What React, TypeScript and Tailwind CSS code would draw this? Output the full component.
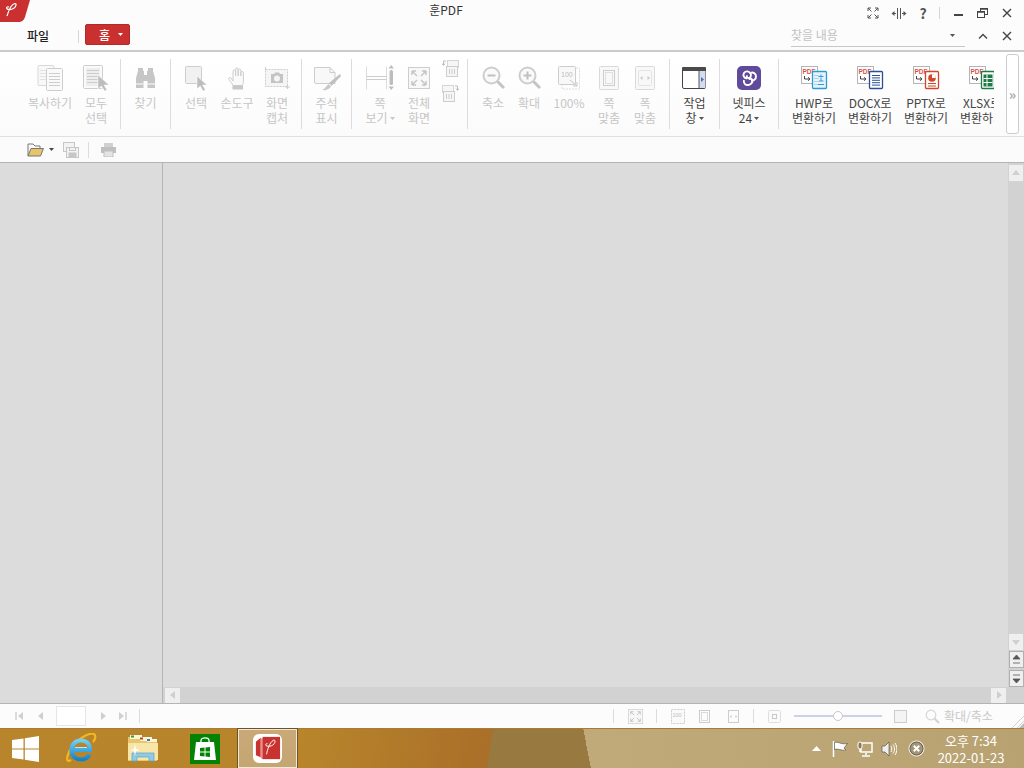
import { ReactNode } from "react"

const G = "#cdcdcd" // disabled icon stroke
const L = "#f1f1f1" // disabled icon fill

const Svg = (props: { w: number; h: number; children: ReactNode; className?: string }) => (
    <svg width={props.w} height={props.h} viewBox={`0 0 ${props.w} ${props.h}`} fill="none" className={`shrink-0 ${props.className || ""}`}>
        {props.children}
    </svg>
)

const Caret = (props: { c?: string }) => (
    <svg width="5" height="3" viewBox="0 0 5 3" className="inline-block ml-[2px] mb-[2px]"><path d="M0 0H5L2.5 3Z" fill={props.c || "#555"} /></svg>
)

const Lines = (props: { x: number; y: number; w: number; n: number; c?: string; step?: number }) => (
    <>
        {Array.from({ length: props.n }).map((_, i) => (
            <path key={i} d={`M${props.x} ${props.y + i * (props.step || 3) + 0.5}h${props.w}`} stroke={props.c || G} />
        ))}
    </>
)

const CopyIcon = () => (
    <Svg w={27} h={26}>
        <rect x="1" y="0.5" width="16" height="20" rx="1" fill="#f8f8f8" stroke="#d8d8d8" />
        <Lines x={3} y={5} w={7} n={4} c="#e2e2e2" />
        <rect x="9.5" y="3.5" width="16" height="22" rx="1" fill="#fafafa" stroke={G} />
        <Lines x={12} y={8} w={11} n={5} />
    </Svg>
)
const SelectAllIcon = () => (
    <Svg w={27} h={26}>
        <rect x="0.5" y="0.5" width="19" height="23" rx="1" fill="#fafafa" stroke={G} />
        <rect x="3" y="3" width="14" height="18" fill="#eeeeee" />
        <Lines x={4} y={5} w={12} n={5} />
        <path d="M15 10L26 20H21L24 25L21.5 26L18.5 21L15 24Z" fill="#bdbdbd" stroke="#fff" strokeWidth="0.5" />
    </Svg>
)
const BinocularIcon = () => (
    <Svg w={21} h={22}>
        <path d="M3 1H8V4H9V8H12V4H13V1H18V4L20 11V21H12.5V14H8.5V21H1V11L3 4Z" fill="#c6c6c6" />
        <path d="M1 17H8.5M12.5 17H20" stroke="#fff" />
    </Svg>
)
const SelectIcon = () => (
    <Svg w={23} h={25}>
        <rect x="0.5" y="0.5" width="16" height="17" rx="1" fill={L} stroke={G} />
        <path d="M12 10L22 19H17.5L20.5 24L18 25L15.2 20L12 23Z" fill="#bdbdbd" stroke="#fff" strokeWidth="0.5" />
    </Svg>
)
const HandIcon = () => (
    <Svg w={18} h={23}>
        <path d="M5 14V4.3a1.3 1.3 0 0 1 2.6 0V9V2.3a1.3 1.3 0 0 1 2.6 0V9V3.3a1.3 1.3 0 0 1 2.6 0V9V5.8a1.3 1.3 0 0 1 2.6 0V14C15.4 16 14.8 17 14.5 18.5H5C4.2 16.5 2.5 15 1 12.5C0.3 10.8 2.2 9.6 3.2 11Z" fill="#fafafa" stroke={G} />
        <rect x="4.5" y="18.5" width="10.5" height="4" fill="#c8c8c8" />
    </Svg>
)
const CaptureIcon = () => (
    <Svg w={26} h={22}>
        <rect x="1.5" y="2.5" width="22" height="17" stroke={G} strokeDasharray="2 1" fill="#f5f5f5" />
        <path d="M7 7H10L11 5.5H15L16 7H19V16H7Z" fill="#c4c4c4" />
        <circle cx="13" cy="11.5" r="3" fill="#f5f5f5" />
        <path d="M1.5 0V3M23.5 18V22M21 20H26" stroke={G} />
    </Svg>
)
const AnnotateIcon = () => (
    <Svg w={28} h={25}>
        <path d="M1.5 1.5H17L22 6.5V17.5H3A1.5 1.5 0 0 1 1.5 16Z" fill="#f8f8f8" stroke={G} />
        <path d="M17 1.5V6.5H22" stroke={G} />
        <path d="M27 8L16 17L18.5 20L28 10Z" fill="#c0c0c0" />
        <path d="M15.5 18L18 20.5C16 24 12 24.5 9 24C12 23 13 20 15.5 18Z" fill="#c8c8c8" />
    </Svg>
)
const PageViewIcon = () => (
    <Svg w={28} h={26}>
        <path d="M0.5 1.5V24.5M20.5 1.5V24.5" stroke="#dcdcdc" />
        <path d="M0.5 11.5H20.5M0.5 14.5H20.5" stroke={G} />
        <rect x="23.5" y="5" width="3.5" height="15" rx="1.5" fill="#bdbdbd" />
        <path d="M25.2 0L28 3.5H22.5ZM25.2 25L28 21.5H22.5Z" fill="#bdbdbd" />
    </Svg>
)
const FullIcon = (props: { s?: number }) => {
    const s = props.s || 22
    return (
        <svg width={s} height={s} viewBox="0 0 22 22" fill="none" className="shrink-0">
            <rect x="0.5" y="0.5" width="21" height="21" fill="#f8f8f8" stroke={G} />
            <path d="M4 4L9 9M4 4H8M4 4V8M18 4L13 9M18 4H14M18 4V8M4 18L9 13M4 18H8M4 18V14M18 18L13 13M18 18H14M18 18V14" stroke="#c4c4c4" strokeWidth="1.4" />
        </svg>
    )
}
const RotateIcon = (props: { flip?: boolean }) => (
    <Svg w={17} h={18} className={props.flip ? "-scale-x-100" : ""}>
        <rect x="5.5" y="1.5" width="11" height="7" fill="#f6f6f6" stroke="#d5d5d5" />
        <rect x="4.5" y="7.5" width="11" height="10" fill="#f6f6f6" stroke={G} />
        <path d="M7.5 10V15M10 10V15M12.5 10V15" stroke={G} />
        <path d="M4 2H1.5V6M0 4.5L1.5 6.5L3 4.5" stroke="#bdbdbd" />
    </Svg>
)
const ZoomIcon = (props: { plus?: boolean }) => (
    <Svg w={23} h={24}>
        <circle cx="9.5" cy="9.5" r="8" stroke={G} strokeWidth="2" fill="#fafafa" />
        <path d="M5.5 9.5H13.5" stroke="#c0c0c0" strokeWidth="2" />
        {props.plus && <path d="M9.5 5.5V13.5" stroke="#c0c0c0" strokeWidth="2" />}
        <path d="M15.5 15.5L22 22" stroke="#c4c4c4" strokeWidth="3" />
    </Svg>
)
const HundredIcon = () => (
    <Svg w={22} h={24}>
        <rect x="0.5" y="0.5" width="17" height="18" rx="1" fill="#f8f8f8" stroke={G} />
        <path d="M18 2H21.5V23H4V19" stroke="#dedede" strokeDasharray="2 1" />
        <text x="3" y="11" fontSize="7" fill="#bdbdbd" fontFamily="Liberation Sans">100</text>
        <path d="M12 14L19 20M19 20V16M19 20H15" stroke="#c8c8c8" />
    </Svg>
)
const FitPageIcon = () => (
    <Svg w={20} h={24}>
        <rect x="0.5" y="0.5" width="19" height="23" rx="1" fill="#f8f8f8" stroke="#dadada" />
        <rect x="4.5" y="4.5" width="11" height="15" stroke={G} />
        <rect x="6.5" y="6.5" width="7" height="11" stroke="#e0e0e0" />
    </Svg>
)
const FitWidthIcon = () => (
    <Svg w={20} h={24}>
        <rect x="0.5" y="0.5" width="19" height="23" rx="1" fill="#f8f8f8" stroke="#dadada" />
        <rect x="3.5" y="4.5" width="13" height="15" rx="1" stroke="#e4e4e4" />
        <path d="M7.5 10L5 12L7.5 14ZM12.5 10L15 12L12.5 14Z" fill="#c8c8c8" />
    </Svg>
)
const TaskPaneIcon = () => (
    <Svg w={25} h={22}>
        <rect x="0.5" y="0.5" width="23" height="21" rx="1.5" fill="#fff" stroke="#444" />
        <rect x="0" y="0" width="24" height="4" rx="1" fill="#4a4a4a" />
        <rect x="17" y="4" width="6.5" height="17" fill="#d4ddf0" />
        <path d="M17 4V21" stroke="#555" />
        <path d="M19 10L22 12.5L19 15Z" fill="#4a6fb5" />
    </Svg>
)
const NetpiaIcon = () => (
    <Svg w={24} h={24}>
        <rect width="24" height="24" rx="5" fill="#5f4a9c" />
        <path d="M10 12.5C7 12 5.5 9.5 7 7C8.5 4.8 12 4.8 13.5 7.5C15 10 13 12.5 11 12C9.5 11.5 9.5 10 10.5 9.5" stroke="#fff" strokeWidth="1.9" />
        <path d="M13.5 7C16 5.8 19 7.5 19 10.5C19 13.5 16.5 15 14 14.5" stroke="#fff" strokeWidth="1.9" />
        <path d="M7 14C6 17 8.5 19.5 11.5 19C14.5 18.5 16 16 15 13.5C14 12 12.5 12.5 12.5 14" stroke="#fff" strokeWidth="1.9" />
    </Svg>
)
const ConvertIcon = (props: { kind: string }) => {
    const c = props.kind === "hwp" ? "#2f9bd6" : props.kind === "docx" ? "#2b4f94" : props.kind === "pptx" ? "#d2462a" : "#1f7a45"
    return (
        <Svg w={27} h={24}>
            <rect x="0.5" y="0.5" width="16" height="17" fill="#fff" stroke="#b5b5b5" />
            <text x="1.5" y="7.5" fontSize="6.5" fontWeight="700" fill="#d8504e" fontFamily="Liberation Sans">PDF</text>
            <path d="M3.5 10V13H8.5M7 11.3L9 13L7 14.7" stroke="#444" />
            <rect x={props.kind === "hwp" ? 11.5 : 12.5} y="5.5" width={props.kind === "hwp" ? 14 : 13} height="17" rx="1" fill={props.kind === "hwp" ? "#e6f3fa" : "#fff"} stroke={c} strokeWidth="1.3" />
            {props.kind === "hwp" && (
                <>
                    <Lines x={13} y={9} w={5} n={4} c="#a8d4ec" />
                    <path d="M20 8.5V10M17.5 10.5H22.5M18 15H22.5M20 11.5V15M17 18.5H23" stroke={c} />
                </>
            )}
            {props.kind === "docx" && <Lines x={15} y={9} w={8} n={5} c={c} step={2.4} />}
            {props.kind === "pptx" && (
                <>
                    <circle cx="19" cy="12" r="3.8" fill={c} />
                    <path d="M19 12V8.2A3.8 3.8 0 0 1 22.8 12Z" fill="#fff" />
                    <path d="M15 17.5H23M15 20H23" stroke={c} />
                </>
            )}
            {props.kind === "xlsx" && (
                <>
                    <rect x="14.5" y="8.5" width="9" height="12" fill={c} />
                    <path d="M14.5 12.5H23.5M14.5 16.5H23.5M18 8.5V20.5" stroke="#fff" />
                </>
            )}
        </Svg>
    )
}

const Sep = () => <div className="w-px h-[70px] bg-[#dddddd] shrink-0" />

const Tool = (props: { w: number; icon: ReactNode; lines: ReactNode[]; on?: boolean }) => (
    <div className={`flex flex-col items-center shrink-0 pt-[2px] text-[12px] leading-[15px] whitespace-nowrap ${props.on ? "text-[#444444]" : "text-[#c6c6c6]"}`} style={{ width: props.w }}>
        <div className="h-[34px] flex items-center justify-center">{props.icon}</div>
        {props.lines.map((l, i) => <div key={i}>{l}</div>)}
    </div>
)

const Ribbon = () => (
    <div className="flex h-[85px] bg-gradient-to-b from-white to-[#fbfbfb] border-b border-[#e0e0e0]">
        <div className="w-[994px] overflow-hidden flex items-start pt-[7px] pl-[27px] shrink-0">
            <Tool w={46} icon={<CopyIcon />} lines={["복사하기"]} />
            <Tool w={46} icon={<SelectAllIcon />} lines={["모두", "선택"]} />
            <div className="w-px shrink-0" />
            <Sep />
            <Tool w={49} icon={<BinocularIcon />} lines={["찾기"]} />
            <Sep />
            <div className="w-[5px] shrink-0" />
            <Tool w={40} icon={<SelectIcon />} lines={["선택"]} />
            <Tool w={42} icon={<HandIcon />} lines={["손도구"]} />
            <Tool w={38} icon={<CaptureIcon />} lines={["화면", "캡처"]} />
            <div className="w-[5px] shrink-0" />
            <Sep />
            <Tool w={49} icon={<AnnotateIcon />} lines={["주석", "표시"]} />
            <Sep />
            <div className="w-[8px] shrink-0" />
            <Tool w={40} icon={<PageViewIcon />} lines={["쪽", <>보기<Caret c="#c6c6c6" /></>]} />
            <Tool w={38} icon={<FullIcon />} lines={["전체", "화면"]} />
            <div className="w-[24px] shrink-0 flex flex-col items-center gap-[7px]">
                <RotateIcon />
                <RotateIcon flip />
            </div>
            <div className="w-[5px] shrink-0" />
            <Sep />
            <div className="w-[7px] shrink-0" />
            <Tool w={36} icon={<ZoomIcon />} lines={["축소"]} />
            <Tool w={36} icon={<ZoomIcon plus />} lines={["확대"]} />
            <Tool w={44} icon={<HundredIcon />} lines={["100%"]} />
            <Tool w={36} icon={<FitPageIcon />} lines={["쪽", "맞춤"]} />
            <Tool w={36} icon={<FitWidthIcon />} lines={["폭", "맞춤"]} />
            <div className="w-[6px] shrink-0" />
            <Sep />
            <Tool on w={49} icon={<TaskPaneIcon />} lines={["작업", <>창<Caret /></>]} />
            <Sep />
            <Tool on w={58} icon={<NetpiaIcon />} lines={["넷피스", <>24<Caret /></>]} />
            <Sep />
            <div className="w-[7px] shrink-0" />
            <Tool on w={56} icon={<ConvertIcon kind="hwp" />} lines={["HWP로", "변환하기"]} />
            <Tool on w={56} icon={<ConvertIcon kind="docx" />} lines={["DOCX로", "변환하기"]} />
            <Tool on w={56} icon={<ConvertIcon kind="pptx" />} lines={["PPTX로", "변환하기"]} />
            <Tool on w={56} icon={<ConvertIcon kind="xlsx" />} lines={["XLSX로", "변환하기"]} />
        </div>
        <div className="w-[13px] h-[80px] ml-[12px] mt-[2px] border border-[#cccccc] rounded-[3px] bg-white flex items-center justify-center text-[#a8a8a8] text-[14px] leading-none font-bold">»</div>
    </div>
)

const ScrollBtn = (props: { children: ReactNode; className?: string }) => (
    <div className={`bg-[#efefef] flex items-center justify-center shrink-0 ${props.className || ""}`}>{props.children}</div>
)

const Tri = (props: { d: "u" | "d" | "l" | "r"; c?: string }) => {
    const p = { u: "M0 6L4 1L8 6Z", d: "M0 2H8L4 7Z", l: "M6 0V8L1 4Z", r: "M2 0V8L7 4Z" }[props.d]
    return <svg width="8" height="8" viewBox="0 0 8 8"><path d={p} fill={props.c || "#cfcfcf"} /></svg>
}

const Workspace = () => (
    <div className="flex h-[541px] bg-[#dcdcdc] border-t border-[#b4b4b4]">
        <div className="w-[163px] border-r border-[#b4b4b4] shrink-0" />
        <div className="flex-1 flex flex-col min-w-0">
            <div className="flex flex-1 min-h-0">
                <div className="flex-1" />
                <div className="w-[16px] bg-[#d2d2d2] flex flex-col items-start pl-px pt-[2px]">
                    <ScrollBtn className="w-[14px] h-[16px]"><Tri d="u" /></ScrollBtn>
                    <div className="flex-1" />
                    <ScrollBtn className="w-[14px] h-[16px]"><Tri d="d" /></ScrollBtn>
                    <ScrollBtn className="w-[15px] h-[17px] mt-px border border-[#b0b0b0]">
                        <svg width="9" height="9" viewBox="0 0 9 9"><path d="M1 4L4.5 0L8 4ZM1 8H8" fill="#555" stroke="#555" strokeWidth="0.8" /></svg>
                    </ScrollBtn>
                    <ScrollBtn className="w-[15px] h-[17px] mt-[2px] border border-[#b0b0b0]">
                        <svg width="9" height="9" viewBox="0 0 9 9"><path d="M1 5L4.5 9L8 5ZM1 1H8" fill="#555" stroke="#555" strokeWidth="0.8" /></svg>
                    </ScrollBtn>
                </div>
            </div>
            <div className="h-[16px] bg-[#d2d2d2] flex items-center pl-[2px] pr-[18px] shrink-0">
                <ScrollBtn className="w-[15px] h-[15px]"><Tri d="l" /></ScrollBtn>
                <div className="flex-1" />
                <ScrollBtn className="w-[15px] h-[15px]"><Tri d="r" /></ScrollBtn>
            </div>
        </div>
    </div>
)

const StatusBar = () => (
    <div className="flex items-center h-[25px] bg-[#fcfcfc] border-t border-[#b4b4b4] relative">
        <div className="w-[15px] shrink-0" />
        <svg width="8" height="8" viewBox="0 0 8 8"><path d="M1 0V8" stroke="#d0d0d0" strokeWidth="1.5" /><path d="M8 0V8L3 4Z" fill="#d0d0d0" /></svg>
        <div className="w-[14px] shrink-0" />
        <Tri d="l" />
        <div className="w-[30px] h-[20px] ml-[11px] border border-[#e6e6e6] bg-white shrink-0" />
        <div className="w-[13px] shrink-0" />
        <Tri d="r" />
        <div className="w-[12px] shrink-0" />
        <svg width="8" height="8" viewBox="0 0 8 8"><path d="M0 0V8L5 4Z" fill="#d0d0d0" /><path d="M7 0V8" stroke="#d0d0d0" strokeWidth="1.5" /></svg>
        <div className="w-px h-[14px] bg-[#dcdcdc] ml-[12px]" />
        <div className="flex-1" />
        <div className="w-px h-[14px] bg-[#dcdcdc] mr-px" />
        <div className="w-[13px] shrink-0" />
        <FullIcon s={15} />
        <div className="w-[13px] shrink-0" />
        <div className="w-px h-[14px] bg-[#dcdcdc]" />
        <div className="w-[14px] shrink-0" />
        <Svg w={14} h={15}>
            <rect x="0.5" y="0.5" width="13" height="14" fill="#fafafa" stroke={G} strokeDasharray="2 1" />
            <text x="1.5" y="8" fontSize="5.5" fill="#bdbdbd" fontFamily="Liberation Sans">100</text>
        </Svg>
        <div className="w-[14px] shrink-0" />
        <Svg w={11} h={13}>
            <rect x="0.5" y="0.5" width="10" height="12" stroke={G} />
            <rect x="2.5" y="2.5" width="6" height="8" stroke="#dadada" />
        </Svg>
        <div className="w-[18px] shrink-0" />
        <Svg w={11} h={13}>
            <rect x="0.5" y="0.5" width="10" height="12" stroke={G} />
            <path d="M3.5 5L1.8 6.5L3.5 8ZM7.5 5L9.2 6.5L7.5 8Z" fill="#c8c8c8" />
        </Svg>
        <div className="w-[14px] shrink-0" />
        <div className="w-px h-[14px] bg-[#dcdcdc]" />
        <div className="w-[14px] shrink-0" />
        <Svg w={13} h={13}>
            <rect x="0.5" y="0.5" width="12" height="12" rx="1" stroke="#dedede" fill="#fbfbfb" />
            <rect x="4.5" y="4.5" width="4" height="4" stroke="#c8c8c8" />
        </Svg>
        <div className="w-[13px] shrink-0" />
        {/* zoom slider */}
        <div className="w-[88px] h-[2px] bg-[#c9d3e6] relative shrink-0">
            <div className="absolute left-[39px] -top-[4px] w-[10px] h-[10px] rounded-full bg-white border border-[#c8c8c8]" />
        </div>
        <div className="w-[12px] shrink-0" />
        <Svg w={13} h={13}>
            <rect x="0.5" y="0.5" width="12" height="12" stroke={G} fill="#f4f4f4" />
        </Svg>
        <div className="w-[18px] shrink-0" />
        <Svg w={15} h={15}>
            <circle cx="6" cy="6" r="4.8" stroke="#d6d6d6" strokeWidth="1.2" fill="#fdfdfd" />
            <path d="M9.5 9.5L14 14" stroke="#d0d0d0" strokeWidth="1.8" />
        </Svg>
        <div className="w-[4px] shrink-0" />
        <span className="text-[12px] leading-none text-[#c9c9c9] whitespace-nowrap w-[80px] shrink-0">확대/축소</span>
        <svg width="14" height="14" viewBox="0 0 14 14" className="absolute right-0 bottom-0"><path d="M14 2L2 14M14 7L7 14" stroke="#d0d0d0" /><path d="M14 9V14H9Z" fill="#bbbbbb" /></svg>
    </div>
)

const WinLogo = () => (
    <svg width="27" height="26" viewBox="0 0 27 26"><path d="M0 4L11.5 2.4V12.4H0ZM12.8 2.2L27 0V12.4H12.8ZM0 13.6H11.5V23.6L0 22ZM12.8 13.6H27V26L12.8 23.8Z" fill="#fff" /></svg>
)
const IeLogo = () => (
    <svg width="31" height="32" viewBox="0 0 31 32" fill="none">
        <defs>
            <linearGradient id="ieb" x1="0" y1="0" x2="0" y2="1"><stop offset="0" stopColor="#6fd0f5" /><stop offset="1" stopColor="#1583c9" /></linearGradient>
        </defs>
        <path d="M5 27C0 30 0 25 4 17C9 8 22 -1 28 1C31 3 28 8 27 9" stroke="#f2b81c" strokeWidth="2.2" />
        <path d="M7 17H24C24 11 20 7.5 15 7.5C9.5 7.5 5.5 11.5 5.5 17C5.5 23 10 26.5 15 26.5C19 26.5 22 24.5 23.5 21.5" stroke="url(#ieb)" strokeWidth="4.2" />
        <path d="M9 14.5H21" stroke="#bfeafa" strokeWidth="1" />
    </svg>
)
const FolderLogo = () => (
    <svg width="32" height="29" viewBox="0 0 32 29" fill="none">
        <path d="M1 3H12L14 5H30V27H1Z" fill="#e8c56f" />
        <rect x="3" y="1" width="12" height="4" fill="#fbf5d8" />
        <rect x="4" y="1.5" width="3" height="2" fill="#2da12d" />
        <rect x="13" y="3" width="12" height="4" fill="#fbf5d8" />
        <rect x="13" y="3.5" width="3" height="2" fill="#c8402c" />
        <rect x="20" y="5" width="10" height="3" fill="#fbf5d8" />
        <rect x="20" y="5" width="3" height="2" fill="#2a7fd0" />
        <path d="M1 9H31V26H1Z" fill="#f8e6a8" />
        <path d="M5 27V19H27V27H22V23H10V27Z" fill="#8fcbe8" stroke="#5aa2c8" strokeWidth="0.7" />
        <path d="M8 10L9 15L13 16L9 17L8 22L7 17L3 16L7 15Z" fill="#fff" />
    </svg>
)
const StoreLogo = () => (
    <div className="w-[30px] h-[30px] bg-[#038203] flex items-center justify-center">
        <svg width="22" height="25" viewBox="0 0 22 25" fill="none">
            <path d="M7 7V4.5C7 1 15 1 15 4.5V7" stroke="#fff" strokeWidth="1.3" />
            <path d="M2 6H20L22 24H0Z" fill="#fff" />
            <path d="M6 12L10.5 11.5V15.5H6ZM11.5 11.5L16 11V15.5H11.5ZM6 16.5H10.5V20.5L6 20ZM11.5 16.5H16V21L11.5 20.5Z" fill="#038203" />
        </svg>
    </div>
)
const AppLogo = () => (
    <svg width="29" height="29" viewBox="0 0 30 30">
        <rect width="30" height="30" rx="6" fill="#fff" />
        <path d="M3 8L8 4V24L3 22Z" fill="#c9332f" />
        <path d="M8 5L11 3.5V26L8 25Z" fill="#e8908c" />
        <rect x="10" y="3" width="18" height="23" fill="#c9332f" />
        <path d="M14 21C15 16 17 9 21 6.5C23.5 5.5 23.5 9 20.5 11.5C19 12.5 15.5 13.5 13.5 12C12.5 11 13.5 9.8 15 10" stroke="#fff" strokeWidth="1" fill="none" />
    </svg>
)

const Taskbar = () => (
    <div className="flex items-center h-[40px] border-t border-[#a97c35] bg-[linear-gradient(79deg,transparent_580px,#c0aa7a_580px,#b9a272_100%),linear-gradient(98.5deg,#b8842c_0,#b8852b_300px,#aa6f29_487px,#98793f_488px)]">
        <div className="w-[12px] shrink-0" />
        <WinLogo />
        <div className="w-[27px] shrink-0" />
        <IeLogo />
        <div className="w-[30px] shrink-0" />
        <FolderLogo />
        <div className="w-[31px] shrink-0" />
        <StoreLogo />
        <div className="w-[18px] shrink-0" />
        <div className="w-[59px] h-[39px] border border-[#f2e8d6] bg-gradient-to-b from-[#c9a978] to-[#c4a672] outline outline-1 outline-[#6e5228] flex items-center justify-center shrink-0">
            <AppLogo />
        </div>
        <div className="flex-1" />
        <svg width="9" height="5" viewBox="0 0 9 5"><path d="M0 5L4.5 0L9 5Z" fill="#fff" /></svg>
        <div className="w-[11px] shrink-0" />
        <svg width="16" height="16" viewBox="0 0 16 16" fill="none">
            <path d="M1.5 0V16" stroke="#fff" strokeWidth="1.5" /><path d="M2.5 1.5C6 0 9 4 15.5 2.5L12 7L14 9C9 10 6 7 2.5 8.5Z" fill="#fff" stroke="#333" strokeWidth="0.5" />
        </svg>
        <div className="w-[9px] shrink-0" />
        <svg width="16" height="16" viewBox="0 0 16 16" fill="none">
            <rect x="4" y="2" width="11" height="9" fill="none" stroke="#fff" strokeWidth="1.5" /><rect x="1" y="1" width="4" height="7" rx="2" fill="#8a7a50" stroke="#fff" /><path d="M9 12V14M5 15H13M3 8V11" stroke="#fff" strokeWidth="1.5" />
        </svg>
        <div className="w-[8px] shrink-0" />
        <svg width="16" height="16" viewBox="0 0 16 16" fill="none">
            <path d="M1 5H4L8 1V15L4 11H1Z" fill="#eee" stroke="#444" strokeWidth="0.6" /><path d="M10 5C11 7 11 9 10 11M12 3.5C14 6 14 10 12 12.5M14 2C16.5 6 16.5 10 14 14" stroke="#fff" />
        </svg>
        <div className="w-[11px] shrink-0" />
        <svg width="17" height="17" viewBox="0 0 17 17" fill="none">
            <circle cx="8.5" cy="8.5" r="7.5" fill="#a39576" stroke="#fff" strokeWidth="1" /><circle cx="8.5" cy="8.5" r="6.5" stroke="#555" strokeWidth="0.8" /><path d="M5.8 5.8L11.2 11.2M11.2 5.8L5.8 11.2" stroke="#fff" strokeWidth="2" />
        </svg>
        <div className="w-[7px] shrink-0" />
        <div className="w-[78px] shrink-0 text-white text-[13px] leading-[17px] text-center">
            <div>오후 7:34</div>
            <div>2022-01-23</div>
        </div>
        <div className="w-[14px] shrink-0" />
    </div>
)

const TitleRows = () => (
    <div className="bg-[#fcfcfc] border-b-2 border-[#cbcbcb] h-[52px] flex flex-col">
        <div className="flex items-start h-[22px] shrink-0">
            <svg width="30" height="22" viewBox="0 0 30 22" className="shrink-0">
                <path d="M0 0H30L25 17C24 20 22 22 18 22H0Z" fill="#c9302f" />
                <path d="M7 16C8.5 11 11 4 15 3.5C17 3.5 16 7 13.5 8.5C11 10 7 10 6.5 8C6.5 7 7.5 6.5 9 7" stroke="#fff" strokeWidth="1.2" fill="none" />
            </svg>
            <span className="ml-[393px] mt-[2px] text-[12px] leading-[16px] text-[#333333] w-[46px] text-center shrink-0">훈PDF</span>
            <div className="flex-1" />
            <div className="flex items-center h-[20px] mt-[3px] mr-[12px]">
                <svg width="12" height="12" viewBox="0 0 12 12" fill="none" stroke="#555"><path d="M1 1L4.5 4.5M1 1H4M1 1V4M11 1L7.5 4.5M11 1H8M11 1V4M1 11L4.5 7.5M1 11H4M1 11V8M11 11L7.5 7.5M11 11H8M11 11V8" /></svg>
                <div className="w-[12px]" />
                <svg width="16" height="11" viewBox="0 0 16 11" fill="none"><path d="M6.5 0V11M9.5 0V11" stroke="#555" /><path d="M3 5.5H5M11 5.5H13" stroke="#555" /><path d="M0.5 5.5L3.5 3V8ZM15.5 5.5L12.5 3V8Z" fill="#555" /></svg>
                <span className="w-[32px] text-center text-[14px] font-bold text-[#555555] leading-none">?</span>
                <div className="w-px h-[12px] bg-[#d4d4d4]" />
                <div className="w-[14px]" />
                <div className="w-[9px] h-[2px] bg-[#444444] mt-[4px]" />
                <div className="w-[14px]" />
                <svg width="11" height="10" viewBox="0 0 11 10" fill="none" stroke="#444"><rect x="3.5" y="0.5" width="7" height="6" strokeWidth="1" /><rect x="0.5" y="3.5" width="7" height="6" fill="#fcfcfc" /><path d="M0.5 4H7.5M3.5 1H10.5" strokeWidth="1.5" /></svg>
                <div className="w-[14px]" />
                <svg width="10" height="10" viewBox="0 0 10 10" stroke="#444" strokeWidth="1.4"><path d="M1 1L9 9M9 1L1 9" /></svg>
            </div>
        </div>
        <div className="flex items-center h-[28px] shrink-0">
            <span className="ml-[27px] text-[12px] font-medium leading-none text-[#222222] w-[51px] shrink-0">파일</span>
            <div className="w-px h-[13px] bg-[#d8d8d8] shrink-0" />
            <div className="ml-[6px] w-[45px] h-[21px] bg-[#c9302f] border border-[#b02a2a] rounded-[2px] flex items-center text-white text-[12px] leading-none shrink-0 mb-[3px]">
                <span className="ml-[13px] font-medium">홈</span>
                <svg width="5" height="3" viewBox="0 0 5 3" className="ml-[8px]"><path d="M0 0H5L2.5 3Z" fill="#fff" /></svg>
            </div>
            <div className="flex-1" />
            <div className="w-[174px] h-[22px] border-b border-[#c8c8c8] flex items-center justify-between text-[12px] text-[#c2c2c2] pr-[10px] shrink-0 mb-[1px]">
                <span>찾을 내용</span>
                <svg width="5" height="3" viewBox="0 0 5 3"><path d="M0 0H5L2.5 3Z" fill="#555" /></svg>
            </div>
            <div className="w-[13px] shrink-0" />
            <svg width="10" height="6" viewBox="0 0 10 6" fill="none" stroke="#444" strokeWidth="1.4"><path d="M1 5.5L5 1.5L9 5.5" /></svg>
            <div className="w-[14px] shrink-0" />
            <svg width="10" height="10" viewBox="0 0 10 10" stroke="#444" strokeWidth="1.4"><path d="M1 1L9 9M9 1L1 9" /></svg>
            <div className="w-[12px] shrink-0" />
        </div>
    </div>
)

const QuickBar = () => (
    <div className="flex items-center h-[25px] bg-[#fbfbfb]">
        <div className="w-[27px] shrink-0" />
        <svg width="17" height="14" viewBox="0 0 17 14" fill="none">
            <path d="M1 13V1H6L8 3H13V5" stroke="#777" /><path d="M1 13L4 5.5H16.5L13.5 13Z" fill="#e6c469" stroke="#777" />
        </svg>
        <svg width="5" height="3" viewBox="0 0 5 3" className="ml-[5px]"><path d="M0 0H5L2.5 3Z" fill="#444" /></svg>
        <div className="w-[9px] shrink-0" />
        <svg width="16" height="16" viewBox="0 0 16 16" fill="none" stroke="#c6c6c6">
            <rect x="0.5" y="0.5" width="11" height="9" fill="#f3f3f3" /><rect x="3.5" y="5.5" width="12" height="10" fill="#f3f3f3" /><rect x="6.5" y="5.5" width="6" height="3" /><rect x="6" y="11" width="7" height="4.5" fill="#c6c6c6" />
        </svg>
        <div className="w-[9px] shrink-0" />
        <div className="w-px h-[16px] bg-[#dcdcdc]" />
        <div className="w-[12px] shrink-0" />
        <svg width="15" height="14" viewBox="0 0 15 14">
            <rect x="3" y="0" width="9" height="4" fill="#d0d0d0" /><rect x="0" y="4" width="15" height="6" fill="#bfbfbf" /><rect x="3" y="8" width="9" height="6" fill="#e4e4e4" stroke="#c0c0c0" />
        </svg>
    </div>
)

export default function App() {
    return (
        <div className="w-[1024px] h-[768px] overflow-hidden flex flex-col bg-white font-['Noto_Sans_CJK_KR','Noto_Sans',sans-serif]">
            <TitleRows />
            <Ribbon />
            <QuickBar />
            <Workspace />
            <StatusBar />
            <Taskbar />
        </div>
    )
}
